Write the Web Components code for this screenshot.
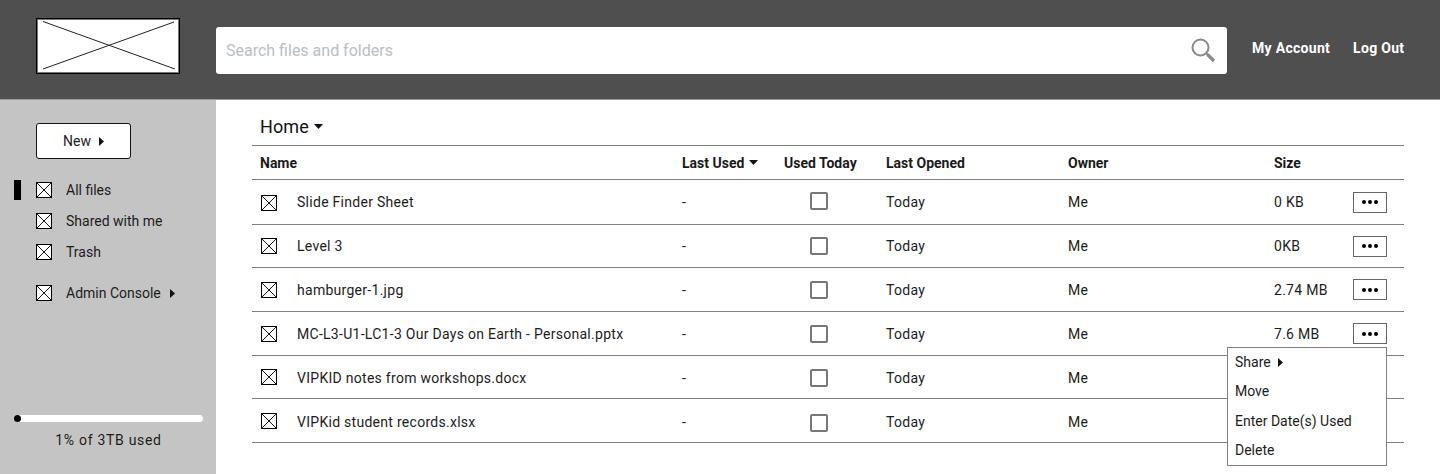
<!DOCTYPE html>
<html><head><meta charset="utf-8">
<style>
html,body{margin:0;padding:0;background:#fff}
body{width:1440px;height:474px;overflow:hidden;font-family:Roboto,"Liberation Sans",sans-serif;color:#1c1c1c}
</style></head><body>
<app-shell>
<app-header></app-header>
<div slot="side"><side-bar></side-bar></div>
<div slot="main">
<file-table>
<file-row h="45" icon="2" box="-2" name="Slide Finder Sheet" size="0 KB"></file-row>
<file-row h="43" name="Level 3" size="0KB"></file-row>
<file-row h="44" name="hamburger-1.jpg" size="2.74 MB"></file-row>
<file-row h="44" name="MC-L3-U1-LC1-3 Our Days on Earth - Personal.pptx" size="7.6 MB" menu></file-row>
<file-row h="43" low icon="-2" name="VIPKID notes from workshops.docx" size=""></file-row>
<file-row h="44" low icon="-2" box="2" name="VIPKid student records.xlsx" size=""></file-row>
</file-table>
</div>
</app-shell>
<script>
const xbox=(s)=>`<svg width="${s}" height="${s}" viewBox="0 0 ${s} ${s}" style="display:block;flex:none"><rect x=".5" y=".5" width="${s-1}" height="${s-1}" fill="#fff" stroke="#000"/><path d="M1 1L${s-1} ${s-1}M${s-1} 1L1 ${s-1}" stroke="#111" stroke-width="1" fill="none"/></svg>`;
const right=`<svg width="5" height="9" viewBox="0 0 5 9" style="display:block;flex:none"><path d="M0 0L5 4.5L0 9Z" fill="#111"/></svg>`;
const down=`<svg width="9" height="5" viewBox="0 0 9 5" style="display:block;flex:none"><path d="M0 0H9L4.5 5Z" fill="#111"/></svg>`;
function def(name,html){
  customElements.define(name,class extends HTMLElement{
    connectedCallback(){
      if(this.shadowRoot)return;
      const r=this.attachShadow({mode:'open'});
      r.innerHTML=typeof html==='function'?html(this):html;
    }
  });
}
def('app-shell',`<style>
:host{display:grid;grid-template-columns:216px 1fr;grid-template-rows:100px 374px;width:1440px;height:474px}
::slotted(app-header){grid-column:1/3}
.s{background:#c4c4c4}.m{position:relative}
</style><slot></slot><div class="s"><slot name="side"></slot></div><div class="m"><slot name="main"></slot></div>`);
def('app-header',`<style>
:host{display:flex;align-items:flex-start;grid-column:1/3;box-sizing:border-box;height:100px;background:#4f4f4f;border-bottom:1px solid #999;padding:18px 36px 0}
.logo{width:144px;height:56px;box-sizing:border-box;border:1px solid #000;box-shadow:inset 0 0 0 1px #777;background:#fff;flex:none}
.logo svg{display:block}
.search{margin:9px 0 0 36px;width:1011px;height:47px;box-sizing:border-box;background:#fff;border-radius:3px;display:flex;align-items:center;justify-content:space-between;padding:0 11px 0 10px;flex:none}
.ph{font-size:16px;color:#b8c0c5;padding-top:.5px}
.search svg{margin-top:-1px}
a{font-size:14px;font-weight:700;color:#fff;letter-spacing:.3px;line-height:16px;margin-top:22px;flex:none;white-space:nowrap}
a.one{margin-left:25px}a.two{margin-left:23px}
</style>
<div class="logo"><svg width="142" height="54" viewBox="0 0 142 54"><path d="M6 2.5L138 50M137 3L6 50" stroke="#222" stroke-width="1" fill="none"/></svg></div>
<div class="search"><span class="ph">Search files and folders</span>
<svg width="26" height="26" viewBox="0 0 26 26"><circle cx="10.5" cy="10.5" r="8" fill="none" stroke="#888" stroke-width="2"/><path d="M16.2 16.2L18 18" stroke="#888" stroke-width="2"/><path d="M17.5 17.5L24 24" stroke="#888" stroke-width="3.2"/></svg></div>
<a class="one">My Account</a><a class="two">Log Out</a>`);
def('nav-item',e=>`<style>
:host{display:flex;align-items:center;height:20px;position:relative;font-size:14px;color:#1c1c1c;padding-left:36px}
span{margin-left:14px;white-space:nowrap}
.c{margin-left:9px}
.bar{position:absolute;left:14px;top:0;width:7px;height:20px;background:#000}
</style>${e.hasAttribute('active')?'<i class="bar"></i>':''}${xbox(16)}<span>${e.getAttribute('label')}</span>${e.hasAttribute('more')?`<div class="c">${right}</div>`:''}`);
def('side-bar',`<style>
:host{display:flex;flex-direction:column;height:374px;box-sizing:border-box;padding-top:23px}
.new{margin-left:36px;width:95px;height:36px;box-sizing:border-box;background:#fff;border:1px solid #111;border-radius:3px;display:flex;align-items:center;justify-content:center;gap:8px;font-size:14px;letter-spacing:.1px}
.list{display:flex;flex-direction:column;gap:11px;margin-top:21px}
.admin{margin-top:10px}
.use{margin:auto 13px 0 14px;padding-bottom:26px;text-align:center;font-size:14px;letter-spacing:.7px}
.track{height:7px;background:#fff;border-radius:4px;position:relative;margin-bottom:10px}
.track i{position:absolute;left:0;top:0;width:7px;height:7px;border-radius:4px;background:#000}
</style>
<div class="new">New ${right}</div>
<div class="list"><nav-item label="All files" active></nav-item><nav-item label="Shared with me"></nav-item><nav-item label="Trash"></nav-item><nav-item class="admin" label="Admin Console" more></nav-item></div>
<div class="use"><div class="track"><i></i></div>1% of 3TB used</div>`);
const cols='grid-template-columns:422px 102px 102px 182px 206px 1fr;';
def('file-table',`<style>
:host{display:block;margin:0 36px;position:relative}
.home{height:46px;box-sizing:border-box;display:flex;align-items:center;gap:5px;padding:8px 8px 0;font-size:18px;letter-spacing:.1px;color:#111;border-bottom:1px solid #808080}
.head{display:grid;${cols}height:34px;box-sizing:border-box;align-items:center;padding-left:8px;font-size:14px;font-weight:700;color:#1a1a1a;border-bottom:1px solid #808080}
.head div{display:flex;align-items:center;gap:5px;white-space:nowrap}
</style>
<div class="home">Home ${down}</div>
<div class="head"><div>Name</div><div>Last Used ${down}</div><div>Used Today</div><div>Last Opened</div><div>Owner</div><div>Size</div></div>
<slot></slot>`);
def('context-menu',`<style>
:host{display:block;position:absolute;z-index:2;right:17px;top:35px;width:160px;height:119px;box-sizing:border-box;background:#fff;border:1px solid #808080;font-size:14px;padding:0 7px}
div{height:29px;display:flex;align-items:center;gap:7px;white-space:nowrap}
div.a{height:28px}div.c{height:30px;box-sizing:border-box;padding-top:2px}
</style><div class="a">Share ${right}</div><div>Move</div><div class="c">Enter Date(s) Used</div><div>Delete</div>`);
def('file-row',e=>{const h=e.getAttribute('h');return `<style>
:host{display:block;position:relative;height:${h}px;box-sizing:border-box;border-bottom:1px solid #808080}
.r{display:grid;${cols}height:100%;box-sizing:border-box;align-items:center;padding:${e.hasAttribute('low')?2:0}px 0 0 8px;font-size:14px;letter-spacing:.28px;color:#1c1c1c;white-space:nowrap}
.n{display:flex;align-items:center;gap:20px}
.n svg{margin-left:1px;margin-top:${e.getAttribute('icon')||0}px}
.cb{display:block;width:18px;height:18px;box-sizing:border-box;border:2px solid #777;border-radius:2px;margin:${e.getAttribute('box')||0}px 0 0 26px}
.a{display:flex;align-items:center}
.sz{display:flex;align-items:center;justify-content:space-between;padding-right:17px}
.more{width:34px;height:21px;box-sizing:border-box;border:1px solid #666;background:#fff;display:flex;align-items:center;justify-content:center;gap:2px}
.more i{width:4px;height:4px;border-radius:50%;background:#000}
</style><div class="r"><div class="n">${xbox(16)}<span>${e.getAttribute('name')}</span></div><div>-</div><div class="a"><span class="cb"></span></div><div>Today</div><div>Me</div>
<div class="sz"><span>${e.getAttribute('size')}</span>${e.getAttribute('size')?'<span class="more"><i></i><i></i><i></i></span>':''}</div></div>${e.hasAttribute('menu')?'<context-menu></context-menu>':''}`});
</script>
</body></html>
